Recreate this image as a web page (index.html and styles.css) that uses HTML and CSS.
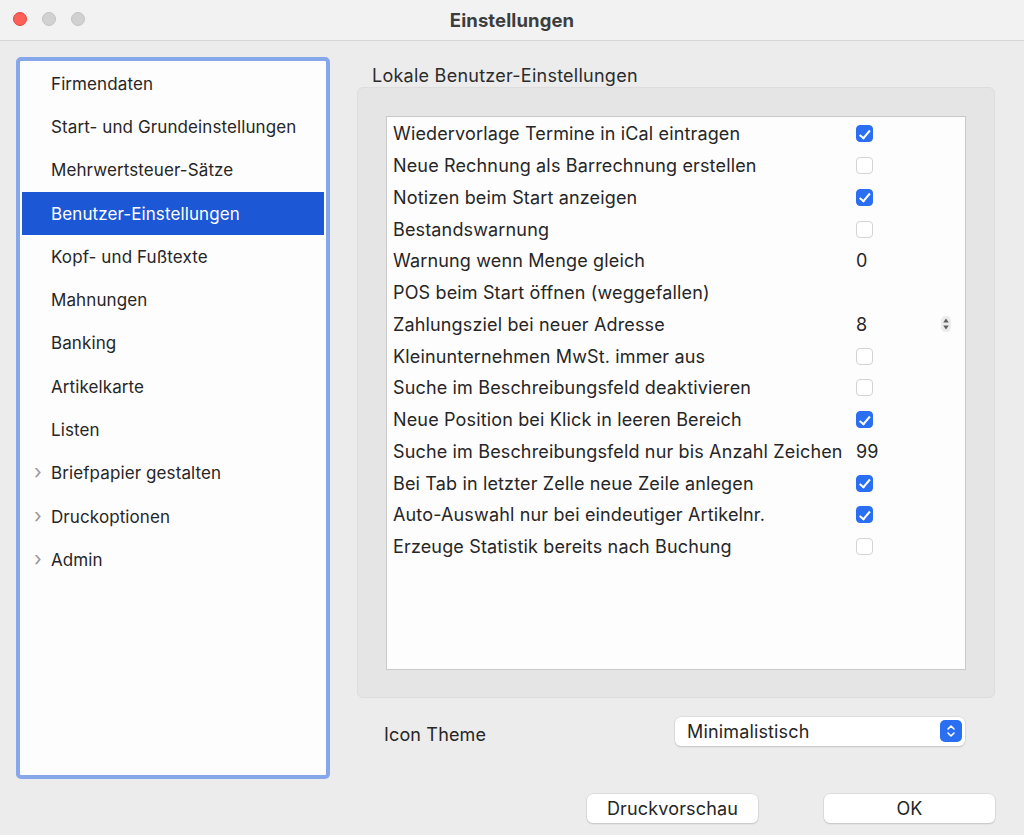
FILE: index.html
```html
<!DOCTYPE html>
<html lang="de">
<head>
<meta charset="utf-8">
<title>Einstellungen</title>
<link rel="stylesheet" href="styles.css">
</head>
<body>
<div class="window">
  <header class="titlebar">
    <div class="lights">
      <span class="light red"></span>
      <span class="light gray"></span>
      <span class="light gray"></span>
    </div>
    <div class="title">Einstellungen</div>
  </header>
  <div class="content">
    <nav class="sidebar">
      <ul class="nav">
        <li class="nav-item">Firmendaten</li>
        <li class="nav-item">Start- und Grundeinstellungen</li>
        <li class="nav-item">Mehrwertsteuer-Sätze</li>
        <li class="nav-item selected">Benutzer-Einstellungen</li>
        <li class="nav-item">Kopf- und Fußtexte</li>
        <li class="nav-item">Mahnungen</li>
        <li class="nav-item">Banking</li>
        <li class="nav-item">Artikelkarte</li>
        <li class="nav-item">Listen</li>
        <li class="nav-item group"><span class="chev">&#x203A;</span>Briefpapier gestalten</li>
        <li class="nav-item group"><span class="chev">&#x203A;</span>Druckoptionen</li>
        <li class="nav-item group"><span class="chev">&#x203A;</span>Admin</li>
      </ul>
    </nav>
    <main class="main">
      <div class="group-label">Lokale Benutzer-Einstellungen</div>
      <section class="groupbox">
        <div class="table">
          <div class="row"><span class="label">Wiedervorlage Termine in iCal eintragen</span><span class="cb on"></span></div>
          <div class="row"><span class="label">Neue Rechnung als Barrechnung erstellen</span><span class="cb"></span></div>
          <div class="row"><span class="label">Notizen beim Start anzeigen</span><span class="cb on"></span></div>
          <div class="row"><span class="label">Bestandswarnung</span><span class="cb"></span></div>
          <div class="row"><span class="label">Warnung wenn Menge gleich</span><span class="val">0</span></div>
          <div class="row"><span class="label">POS beim Start öffnen (weggefallen)</span></div>
          <div class="row"><span class="label">Zahlungsziel bei neuer Adresse</span><span class="val">8</span><span class="stepper"><svg width="10" height="17" viewBox="0 0 10 17"><rect x="0" y="0" width="10" height="17" rx="5" fill="#ececec"/><path d="M5 3 L7.8 7 H2.2 Z M5 14 L7.8 10 H2.2 Z" fill="#606060"/></svg></span></div>
          <div class="row"><span class="label">Kleinunternehmen MwSt. immer aus</span><span class="cb"></span></div>
          <div class="row"><span class="label">Suche im Beschreibungsfeld deaktivieren</span><span class="cb"></span></div>
          <div class="row"><span class="label">Neue Position bei Klick in leeren Bereich</span><span class="cb on"></span></div>
          <div class="row"><span class="label">Suche im Beschreibungsfeld nur bis Anzahl Zeichen</span><span class="val">99</span></div>
          <div class="row"><span class="label">Bei Tab in letzter Zelle neue Zeile anlegen</span><span class="cb on"></span></div>
          <div class="row"><span class="label">Auto-Auswahl nur bei eindeutiger Artikelnr.</span><span class="cb on"></span></div>
          <div class="row"><span class="label">Erzeuge Statistik bereits nach Buchung</span><span class="cb"></span></div>
        </div>
      </section>
      <div class="theme-row">
        <span class="theme-label">Icon Theme</span>
        <div class="popup">
          <span>Minimalistisch</span>
          <span class="popup-arrows"><svg width="12" height="16" viewBox="0 0 12 16"><path d="M3 6 L6 3 L9 6 M3 10 L6 13 L9 10" fill="none" stroke="#fff" stroke-width="1.6" stroke-linecap="round" stroke-linejoin="round"/></svg></span>
        </div>
      </div>
      <div class="buttons">
        <button class="btn">Druckvorschau</button>
        <button class="btn ok">OK</button>
      </div>
    </main>
  </div>
</div>
</body>
</html>
```

FILE: styles.css
```css
* { box-sizing: border-box; }
html, body { margin: 0; padding: 0; }
body {
  width: 1024px;
  height: 835px;
  background: #ececec;
  font-family: "Inter", "Noto Sans", "Liberation Sans", sans-serif;
  color: #262626;
  overflow: hidden;
}
.window {
  width: 1024px;
  height: 835px;
  display: flex;
  flex-direction: column;
  background: #ececec;
}
.titlebar {
  height: 41px;
  background: #f2f2f2;
  border-bottom: 1px solid #d6d6d6;
  position: relative;
  display: flex;
  align-items: center;
  justify-content: center;
  flex-shrink: 0;
}
.lights {
  position: absolute;
  left: 13px;
  top: 12px;
  display: flex;
  gap: 15px;
}
.light {
  width: 14px;
  height: 14px;
  border-radius: 50%;
  display: block;
}
.light.red { background: #fe5f57; border: 0.5px solid #e14640; }
.light.gray { background: #d1d1d1; border: 0.5px solid #c3c3c3; }
.title {
  font-weight: 700;
  font-size: 18.5px;
  color: #3d3d3d;
  letter-spacing: 0.1px;
  margin-top: -1px;
}
.content {
  display: flex;
  padding: 16px 31px 0 16px;
  flex: 1;
  gap: 27px;
}
.sidebar {
  width: 314px;
  height: 722px;
  border: 4px solid #86a7ea;
  border-radius: 5px;
  background: #fefdfe;
  padding: 0 2px;
  flex-shrink: 0;
}
.nav {
  list-style: none;
  margin: 0;
  padding: 1px 0 0 0;
}
.nav-item {
  height: 43.3px;
  display: flex;
  align-items: center;
  padding-left: 29px;
  font-size: 17px;
  letter-spacing: 0.1px;
  color: #262626;
  position: relative;
}
.nav-item.selected {
  background: #1c57d6;
  color: #ffffff;
}
.chev {
  position: absolute;
  left: 12px;
  top: 50%;
  transform: translateY(-56%);
  color: #9a9a9a;
  font-size: 20px;
  line-height: 1;
}
.main {
  flex: 1;
  display: flex;
  flex-direction: column;
}
.group-label {
  font-size: 18px;
  letter-spacing: 0.25px;
  color: #2b2b2b;
  padding-left: 15px;
  height: 24px;
  display: flex;
  align-items: center;
  margin-top: 6px;
}
.groupbox {
  background: #e5e5e5;
  border: 1px solid #dddddd;
  border-radius: 6px;
  height: 611px;
  padding: 28px 28px 27px 28px;
}
.table {
  background: #fefdfe;
  border: 1px solid #c9c9c9;
  height: 100%;
  padding-top: 1px;
}
.row {
  height: 31.75px;
  display: flex;
  align-items: center;
  padding-left: 6px;
  font-size: 18px;
  letter-spacing: 0.15px;
  color: #262626;
  position: relative;
}
.label { width: 463px; white-space: nowrap; }
.val { font-size: 18px; }
.cb {
  width: 17px;
  height: 17px;
  border-radius: 4px;
  border: 1px solid #d3d3d3;
  background: #fff;
  margin-left: 0;
  display: block;
  position: relative;
}
.cb.on {
  background: #2a6ff2;
  border-color: #2a6ff2;
}
.cb.on::after {
  content: "";
  position: absolute;
  left: 5px;
  top: 1.5px;
  width: 4px;
  height: 8.5px;
  border: solid #fff;
  border-width: 0 2.2px 2.2px 0;
  transform: rotate(40deg);
}
.stepper {
  position: absolute;
  left: 554px;
  top: 50%;
  transform: translateY(-50%);
  display: flex;
}
.theme-row {
  display: flex;
  align-items: center;
  margin-top: 18px;
  padding-left: 27px;
  height: 30px;
}
.theme-label {
  font-size: 18px;
  letter-spacing: 0.15px;
  width: 291px;
  margin-top: 7px;
}
.popup {
  width: 290px;
  height: 29px;
  background: #fff;
  border-radius: 6px;
  box-shadow: 0 0 0 0.5px #cfcfcf, 0 1px 1.5px rgba(0,0,0,0.2);
  display: flex;
  align-items: center;
  justify-content: space-between;
  padding: 0 3px 0 12px;
  font-size: 18px;
  letter-spacing: 0.15px;
  color: #262626;
}
.popup-arrows {
  width: 22px;
  height: 22px;
  background: #2a6ff2;
  border-radius: 5px;
  display: flex;
  align-items: center;
  justify-content: center;
}
.buttons {
  display: flex;
  gap: 66px;
  margin-top: 48px;
  padding-left: 230px;
}
.btn {
  height: 29px;
  width: 171px;
  background: #fff;
  border: none;
  border-radius: 6px;
  box-shadow: 0 0 0 0.5px #cfcfcf, 0 1px 1.5px rgba(0,0,0,0.2);
  font-family: inherit;
  font-size: 18px;
  letter-spacing: 0.15px;
  color: #262626;
  padding: 0;
}
```
